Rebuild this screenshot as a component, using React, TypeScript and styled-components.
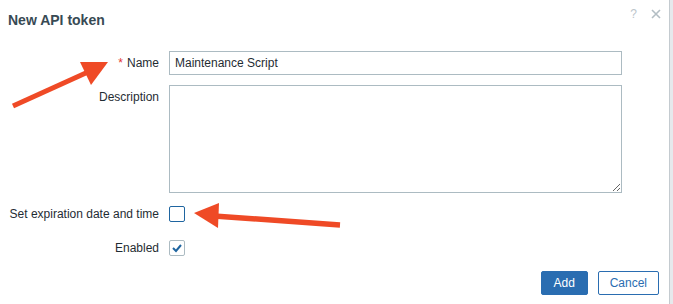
import React from 'react';
import styled, { createGlobalStyle } from 'styled-components';

const GlobalStyle = createGlobalStyle`
  html, body {
    margin: 0;
    padding: 0;
    background-color: #e6e9ec;
    font-family: "Liberation Sans", Arial, sans-serif;
  }
  * {
    box-sizing: border-box;
  }
`;

const Page = styled.div`
  position: relative;
  width: 673px;
  height: 304px;
  overflow: hidden;
  display: flex;
`;

const Dialog = styled.div`
  display: flex;
  flex-direction: column;
  width: 670px;
  height: 304px;
  background-color: #ffffff;
  border-right: 1px solid #c4cbd0;
`;

const Header = styled.div`
  display: flex;
  justify-content: space-between;
  align-items: flex-start;
  padding: 10px 8px 0 8px;
`;

const Title = styled.h4`
  margin: 0;
  font-size: 14px;
  line-height: 20px;
  font-weight: 700;
  color: #384a54;
`;

const HeaderIcons = styled.div`
  display: flex;
  align-items: center;
  gap: 14px;
  margin-top: -2px;
  color: #b9c3c9;
`;

const HelpIcon = styled.span`
  font-size: 12px;
  line-height: 12px;
  color: #bcc5cb;
`;

const Form = styled.div`
  display: flex;
  flex-direction: column;
  padding-top: 21px;
`;

const FormRow = styled.div<{ $gap: number; $center?: boolean }>`
  display: grid;
  grid-template-columns: 159px 453px;
  column-gap: 10px;
  align-items: ${p => (p.$center ? 'center' : 'start')};
  margin-top: ${p => p.$gap}px;
`;

const Label = styled.label<{ $center?: boolean }>`
  text-align: right;
  font-size: 12px;
  line-height: 14px;
  padding-top: ${p => (p.$center ? 0 : 5)}px;
  color: #1f2c33;
`;

const Required = styled.span`
  color: #e33734;
  margin-right: 4px;
`;

const TextInput = styled.input`
  width: 453px;
  height: 24px;
  padding: 0 5px;
  border: 1px solid #acbbc2;
  border-radius: 0;
  font-family: "Liberation Sans", Arial, sans-serif;
  font-size: 12px;
  color: #1f2c33;
  outline: none;
`;

const TextArea = styled.textarea`
  display: block;
  width: 453px;
  height: 108px;
  margin: 0;
  padding: 4px 5px;
  border: 1px solid #acbbc2;
  border-radius: 0;
  font-family: "Liberation Sans", Arial, sans-serif;
  font-size: 12px;
  outline: none;
`;

const CheckBox = styled.div<{ $focused?: boolean }>`
  display: flex;
  align-items: center;
  justify-content: center;
  width: 16px;
  height: 16px;
  border: 1px solid ${p => (p.$focused ? '#1f65a0' : '#acbbc2')};
  border-radius: 2px;
  background-color: #ffffff;
`;

const Footer = styled.div`
  display: flex;
  justify-content: flex-end;
  gap: 10px;
  margin-top: 15px;
  padding-right: 10px;
`;

const Button = styled.button<{ $alt?: boolean }>`
  height: 24px;
  padding: 0 11px;
  min-width: 47px;
  border-radius: 2px;
  border: 1px solid #2a6db1;
  background-color: ${p => (p.$alt ? '#ffffff' : '#2a6db1')};
  color: ${p => (p.$alt ? '#2a6db1' : '#ffffff')};
  font-family: "Liberation Sans", Arial, sans-serif;
  font-size: 12px;
  cursor: pointer;
`;

const ArrowLayer = styled.svg`
  position: absolute;
  left: 0;
  top: 0;
  pointer-events: none;
`;

const CloseIcon = () => (
  <svg width="10" height="10" viewBox="0 0 10 10">
    <path d="M1 1 L9 9 M9 1 L1 9" stroke="#b3bec4" strokeWidth="1.6" />
  </svg>
);

const CheckMark = () => (
  <svg width="12" height="10" viewBox="0 0 12 10">
    <path d="M2 5 L5 8 L10 2" stroke="#1f65a0" strokeWidth="2" fill="none" />
  </svg>
);

const Arrows = () => (
  <ArrowLayer width="673" height="304" viewBox="0 0 673 304">
    <line x1="13" y1="106" x2="88" y2="72" stroke="#ef4a26" strokeWidth="5" />
    <polygon points="80,62 108,62 91,85" fill="#ef4a26" />
    <line x1="214" y1="216" x2="340" y2="225" stroke="#ef4a26" strokeWidth="5.5" />
    <polygon points="194,213 219,203 218,228" fill="#ef4a26" />
  </ArrowLayer>
);

export default function App() {
  return (
    <Page>
      <GlobalStyle />
      <Dialog>
        <Header>
          <Title>New API token</Title>
          <HeaderIcons>
            <HelpIcon>?</HelpIcon>
            <CloseIcon />
          </HeaderIcons>
        </Header>
        <Form>
          <FormRow $gap={0}>
            <Label>
              <Required>*</Required>Name
            </Label>
            <TextInput defaultValue="Maintenance Script" />
          </FormRow>
          <FormRow $gap={10}>
            <Label>Description</Label>
            <TextArea />
          </FormRow>
          <FormRow $gap={13} $center>
            <Label $center>Set expiration date and time</Label>
            <CheckBox $focused />
          </FormRow>
          <FormRow $gap={18} $center>
            <Label $center>Enabled</Label>
            <CheckBox>
              <CheckMark />
            </CheckBox>
          </FormRow>
        </Form>
        <Footer>
          <Button>Add</Button>
          <Button $alt>Cancel</Button>
        </Footer>
      </Dialog>
      <Arrows />
    </Page>
  );
}
